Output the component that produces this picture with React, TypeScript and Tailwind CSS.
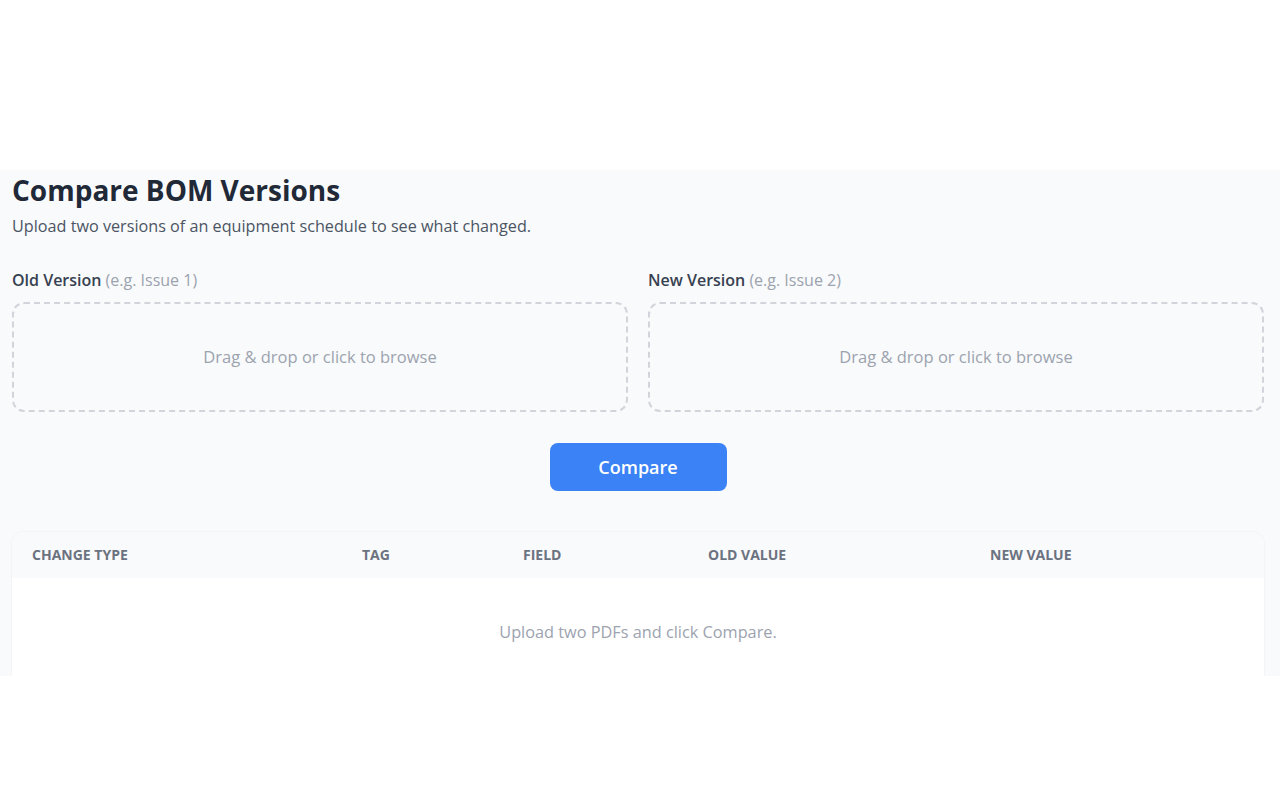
import { useState } from 'react'

interface DropZoneProps {
  label: string
  hint: string
}

function DropZone({ label, hint }: DropZoneProps) {
  const [file, setFile] = useState<string | null>(null)

  return (
    <div className="flex flex-col">
      <div className="mb-2.5 text-base leading-6">
        <span className="font-semibold text-[#374151]">{label}</span>{' '}
        <span className="text-[#9ca3af]">({hint})</span>
      </div>
      <label className="flex h-[110px] cursor-pointer items-center justify-center rounded-xl border-2 border-dashed border-[#d1d5db] text-[16.5px] text-[#9ca3af] hover:border-[#60a5fa]">
        <input
          type="file"
          accept="application/pdf"
          className="hidden"
          onChange={(e) => setFile(e.target.files?.[0]?.name ?? null)}
        />
        {file ?? 'Drag & drop or click to browse'}
      </label>
    </div>
  )
}

const columns = [
  { name: 'Change Type', width: 'w-[330px]' },
  { name: 'Tag', width: 'w-[161px]' },
  { name: 'Field', width: 'w-[185px]' },
  { name: 'Old Value', width: 'w-[282px]' },
  { name: 'New Value', width: '' },
]

export default function App() {
  return (
    <div className="h-screen overflow-hidden bg-white pt-[170px] font-['Open_Sans',sans-serif]">
      <div className="h-[506px] overflow-hidden bg-[#f9fafb] pl-3 pr-4 pt-0.5">
        <h1 className="text-[28px] font-bold leading-9 text-[#1f2937]">Compare BOM Versions</h1>
        <p className="mt-1.5 text-[16.2px] leading-6 text-[#4b5563]">
          Upload two versions of an equipment schedule to see what changed.
        </p>

        <div className="mt-[30px] grid grid-cols-2 gap-5">
          <DropZone label="Old Version" hint="e.g. Issue 1" />
          <DropZone label="New Version" hint="e.g. Issue 2" />
        </div>

        <div className="mt-[31px] flex justify-center">
          <button
            type="button"
            className="h-12 w-[177px] rounded-lg bg-[#3b82f6] text-lg font-semibold text-white hover:bg-[#2563eb]"
          >
            Compare
          </button>
        </div>

        <div className="mt-[41px] overflow-hidden rounded-xl bg-white shadow-[0_0_0_1px_#f3f4f6]">
          <table className="w-full table-fixed border-collapse text-left">
            <thead className="bg-[#f9fafb]">
              <tr>
                {columns.map((col) => (
                  <th
                    key={col.name}
                    className={`${col.width} h-[46px] px-5 text-sm font-bold uppercase text-[#6b7280]`}
                  >
                    {col.name}
                  </th>
                ))}
              </tr>
            </thead>
            <tbody>
              <tr>
                <td colSpan={5} className="py-[42px] text-center text-[16.3px] leading-6 text-[#9ca3af]">
                  Upload two PDFs and click Compare.
                </td>
              </tr>
            </tbody>
          </table>
        </div>
      </div>
    </div>
  )
}
